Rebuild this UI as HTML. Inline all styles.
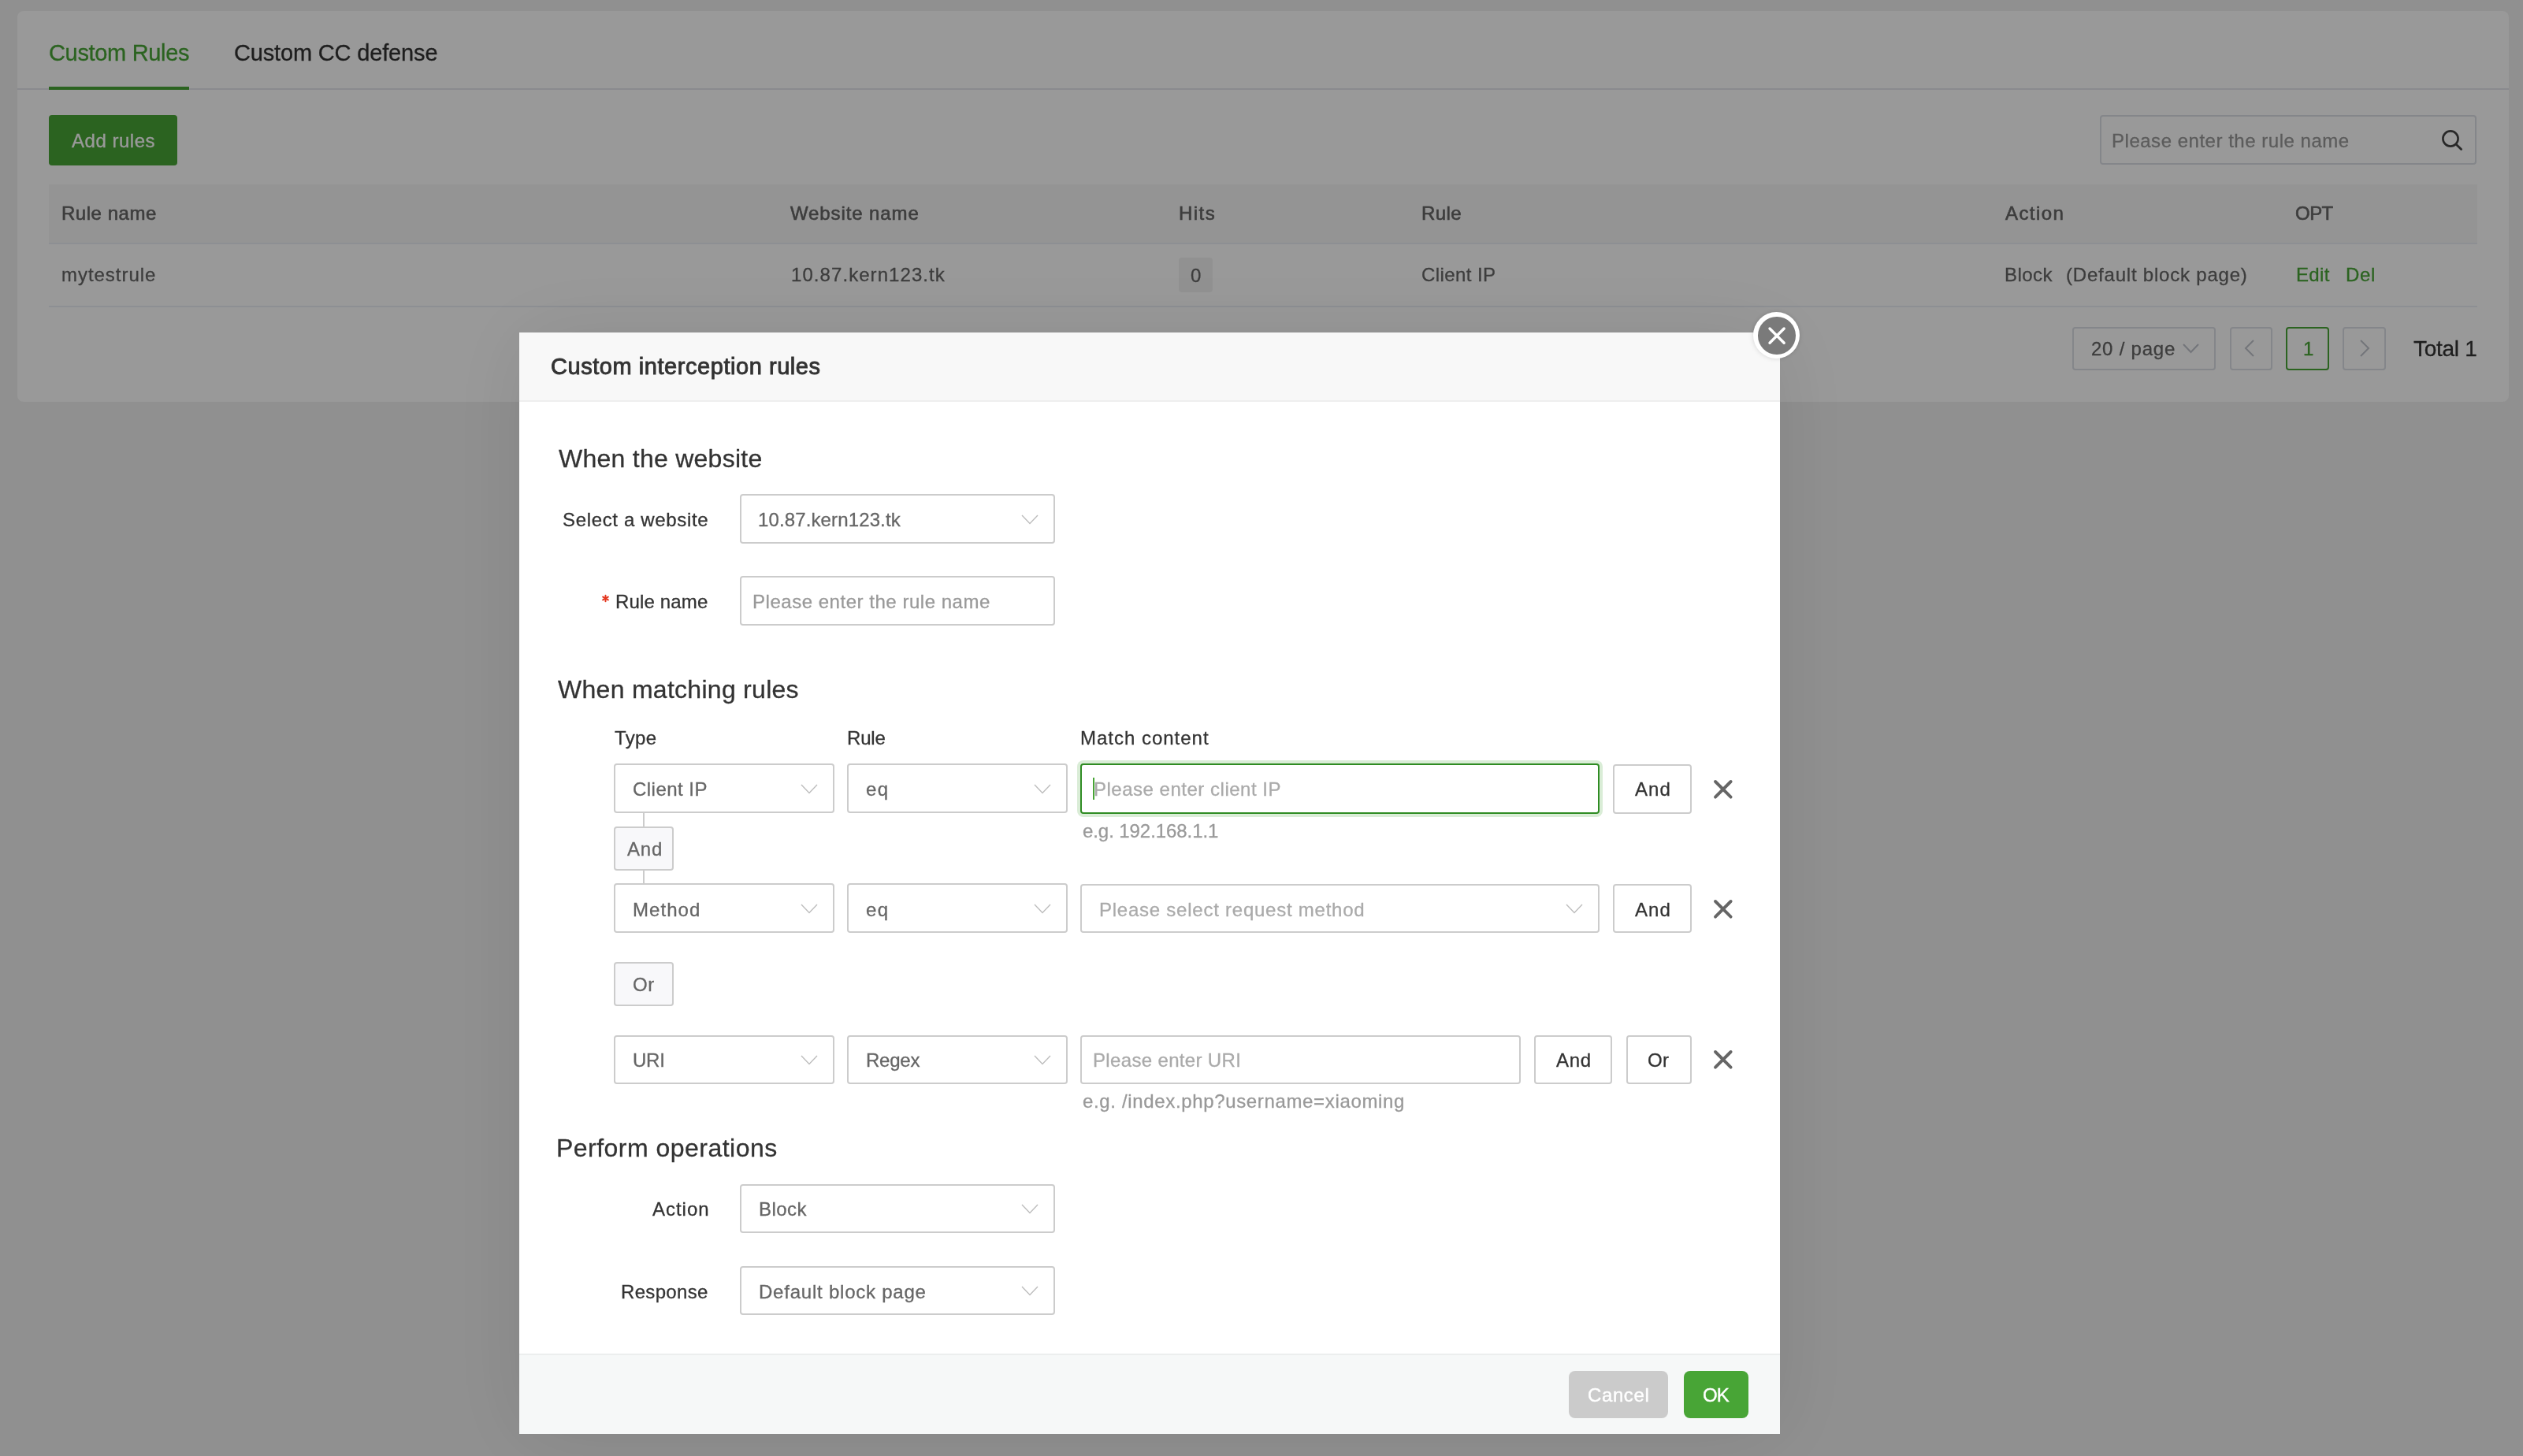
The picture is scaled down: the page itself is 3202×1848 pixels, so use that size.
<!DOCTYPE html>
<html><head><meta charset="utf-8"><title>Custom interception rules</title>
<style>
html,body{margin:0;padding:0;width:3202px;height:1848px;overflow:hidden;}
body{font-family:"Liberation Sans",sans-serif;position:relative;}
@media (max-width:2400px){html{zoom:0.5;}}
</style></head><body>
<div style="position:absolute;left:0;top:0;width:3202px;height:1848px;background:#f0f0f0"></div>
<div style="position:absolute;left:22px;top:14px;width:3162px;height:496px;box-sizing:border-box;background:#fff;border-radius:8px"></div>
<div style="position:absolute;left:22px;top:112px;width:3162px;height:2px;box-sizing:border-box;background:#e4e7ed"></div>
<div style="position:absolute;left:62.00px;top:53.35px;font-size:29px;line-height:29px;font-weight:400;color:#48a536;letter-spacing:-0.329px;white-space:pre;will-change:transform;-webkit-text-stroke:0.3px #48a536;">Custom Rules</div>
<div style="position:absolute;left:62px;top:110px;width:178px;height:4px;box-sizing:border-box;background:#48a536"></div>
<div style="position:absolute;left:296.50px;top:53.35px;font-size:29px;line-height:29px;font-weight:400;color:#333;letter-spacing:-0.162px;white-space:pre;will-change:transform;-webkit-text-stroke:0.3px #333;">Custom CC defense</div>
<div style="position:absolute;left:62px;top:146px;width:163px;height:64px;box-sizing:border-box;background:#48a536;border-radius:4px"></div>
<div style="position:absolute;left:91.00px;top:167.48px;font-size:24px;line-height:24px;font-weight:400;color:#fff;letter-spacing:0.514px;white-space:pre;will-change:transform;-webkit-text-stroke:0.3px #fff;">Add rules</div>
<div style="position:absolute;left:2665px;top:146px;width:478px;height:63px;box-sizing:border-box;border:2px solid #dcdfe6;border-radius:4px;background:#fff"></div>
<div style="position:absolute;left:2680.20px;top:166.98px;font-size:24px;line-height:24px;font-weight:400;color:#999;letter-spacing:0.519px;white-space:pre;will-change:transform;-webkit-text-stroke:0.3px #999;">Please enter the rule name</div>
<svg style="position:absolute;left:3094px;top:160px" width="36" height="36"><circle cx="16" cy="16" r="9.6" stroke="#444" stroke-width="2.6" fill="none"/><path d="M23.2 23.2 L29.6 29.6" stroke="#444" stroke-width="2.8" stroke-linecap="round"/></svg>
<div style="position:absolute;left:62px;top:234px;width:3082px;height:74px;box-sizing:border-box;background:#f7f7f7"></div>
<div style="position:absolute;left:62px;top:308px;width:3082px;height:2px;box-sizing:border-box;background:#ebeef5"></div>
<div style="position:absolute;left:62px;top:388px;width:3082px;height:2px;box-sizing:border-box;background:#ebeef5"></div>
<div style="position:absolute;left:78.10px;top:259.28px;font-size:24px;line-height:24px;font-weight:400;color:#666;letter-spacing:0.536px;white-space:pre;will-change:transform;-webkit-text-stroke:0.6px #666">Rule name</div>
<div style="position:absolute;left:1003.00px;top:259.28px;font-size:24px;line-height:24px;font-weight:400;color:#666;letter-spacing:0.898px;white-space:pre;will-change:transform;-webkit-text-stroke:0.6px #666">Website name</div>
<div style="position:absolute;left:1495.80px;top:259.28px;font-size:24px;line-height:24px;font-weight:400;color:#666;letter-spacing:1.456px;white-space:pre;will-change:transform;-webkit-text-stroke:0.6px #666">Hits</div>
<div style="position:absolute;left:1804.00px;top:259.28px;font-size:24px;line-height:24px;font-weight:400;color:#666;letter-spacing:0.396px;white-space:pre;will-change:transform;-webkit-text-stroke:0.6px #666">Rule</div>
<div style="position:absolute;left:2544.60px;top:259.28px;font-size:24px;line-height:24px;font-weight:400;color:#666;letter-spacing:1.409px;white-space:pre;will-change:transform;-webkit-text-stroke:0.6px #666">Action</div>
<div style="position:absolute;left:2913.20px;top:259.28px;font-size:24px;line-height:24px;font-weight:400;color:#666;letter-spacing:-0.538px;white-space:pre;will-change:transform;-webkit-text-stroke:0.6px #666">OPT</div>
<div style="position:absolute;left:78.10px;top:337.38px;font-size:24px;line-height:24px;font-weight:400;color:#666;letter-spacing:0.961px;white-space:pre;will-change:transform;-webkit-text-stroke:0.3px #666;">mytestrule</div>
<div style="position:absolute;left:1004.00px;top:337.38px;font-size:24px;line-height:24px;font-weight:400;color:#666;letter-spacing:1.067px;white-space:pre;will-change:transform;-webkit-text-stroke:0.3px #666;">10.87.kern123.tk</div>
<div style="position:absolute;left:1496px;top:327px;width:43px;height:44px;box-sizing:border-box;background:#f2f2f2;border-radius:4px"></div>
<div style="position:absolute;left:1511.00px;top:338.28px;font-size:24px;line-height:24px;font-weight:400;color:#666;letter-spacing:0.000px;white-space:pre;will-change:transform;-webkit-text-stroke:0.3px #666;">0</div>
<div style="position:absolute;left:1804.00px;top:337.38px;font-size:24px;line-height:24px;font-weight:400;color:#666;letter-spacing:0.413px;white-space:pre;will-change:transform;-webkit-text-stroke:0.3px #666;">Client IP</div>
<div style="position:absolute;left:2543.60px;top:337.38px;font-size:24px;line-height:24px;font-weight:400;color:#666;letter-spacing:0.428px;white-space:pre;will-change:transform;-webkit-text-stroke:0.3px #666;">Block</div>
<div style="position:absolute;left:2622.00px;top:337.38px;font-size:24px;line-height:24px;font-weight:400;color:#666;letter-spacing:0.790px;white-space:pre;will-change:transform;-webkit-text-stroke:0.3px #666;">(Default block page)</div>
<div style="position:absolute;left:2913.50px;top:337.38px;font-size:24px;line-height:24px;font-weight:400;color:#48a536;letter-spacing:0.338px;white-space:pre;will-change:transform;-webkit-text-stroke:0.3px #48a536;">Edit</div>
<div style="position:absolute;left:2977.00px;top:337.38px;font-size:24px;line-height:24px;font-weight:400;color:#48a536;letter-spacing:0.660px;white-space:pre;will-change:transform;-webkit-text-stroke:0.3px #48a536;">Del</div>
<div style="position:absolute;left:2630px;top:415px;width:182px;height:55px;box-sizing:border-box;border:2px solid #dcdfe6;border-radius:4px;background:#fff"></div>
<div style="position:absolute;left:2654.40px;top:431.28px;font-size:24px;line-height:24px;font-weight:400;color:#666;letter-spacing:0.770px;white-space:pre;will-change:transform;-webkit-text-stroke:0.3px #666;">20 / page</div>
<svg style="position:absolute;left:2769.0px;top:435.0px" width="23" height="14"><polyline points="2,2 11.5,12 21,2" fill="none" stroke="#c0c4cc" stroke-width="2"/></svg>
<div style="position:absolute;left:2830px;top:415px;width:54px;height:55px;box-sizing:border-box;border:2px solid #dcdfe6;border-radius:4px;background:#fff"></div>
<svg style="position:absolute;left:2845px;top:428px" width="22" height="28"><polyline points="15,4 5,14 15,24" fill="none" stroke="#c0c4cc" stroke-width="2"/></svg>
<div style="position:absolute;left:2901px;top:415px;width:55px;height:55px;box-sizing:border-box;border:2px solid #48a536;border-radius:4px;background:#fff"></div>
<div style="position:absolute;left:2923.40px;top:431.28px;font-size:24px;line-height:24px;font-weight:400;color:#48a536;letter-spacing:0.000px;white-space:pre;will-change:transform;-webkit-text-stroke:0.3px #48a536;">1</div>
<div style="position:absolute;left:2973px;top:415px;width:55px;height:55px;box-sizing:border-box;border:2px solid #dcdfe6;border-radius:4px;background:#fff"></div>
<svg style="position:absolute;left:2991px;top:428px" width="22" height="28"><polyline points="5,4 15,14 5,24" fill="none" stroke="#c0c4cc" stroke-width="2"/></svg>
<div style="position:absolute;left:3062.50px;top:428.70px;font-size:28px;line-height:28px;font-weight:400;color:#333;letter-spacing:-0.287px;white-space:pre;will-change:transform;-webkit-text-stroke:0.3px #333;">Total 1</div>
<div style="position:absolute;left:0;top:0;width:3202px;height:1848px;background:rgba(0,0,0,0.4)"></div>
<div style="position:absolute;left:659px;top:422px;width:1600px;height:1398px;box-sizing:border-box;background:#fff;box-shadow:2px 2px 100px rgba(0,0,0,0.09)"></div>
<div style="position:absolute;left:659px;top:422px;width:1600px;height:88px;box-sizing:border-box;background:#f8f8f8;border-bottom:2px solid #eee"></div>
<div style="position:absolute;left:698.50px;top:451.05px;font-size:29px;line-height:29px;font-weight:400;color:#333;letter-spacing:0.549px;white-space:pre;will-change:transform;-webkit-text-stroke:0.9px #333">Custom interception rules</div>
<div style="position:absolute;left:2225px;top:396px;width:59px;height:59px;border-radius:50%;background:#fff;box-shadow:0 0 6px rgba(0,0,0,0.15)"></div>
<div style="position:absolute;left:2231px;top:402px;width:47.5px;height:47.5px;border-radius:50%;background:#7a7a7a"></div>
<svg style="position:absolute;left:2241.6px;top:412.9px" width="26.2" height="26.2"><path d="M4 4 L22.2 22.2 M22.2 4 L4 22.2" stroke="#fff" stroke-width="3.4" stroke-linecap="round" fill="none"/></svg>
<div style="position:absolute;left:708.60px;top:565.71px;font-size:32px;line-height:32px;font-weight:400;color:#333;letter-spacing:0.256px;white-space:pre;will-change:transform;-webkit-text-stroke:0.3px #333;">When the website</div>
<div style="position:absolute;left:713.70px;top:648.48px;font-size:24px;line-height:24px;font-weight:400;color:#333;letter-spacing:0.659px;white-space:pre;will-change:transform;-webkit-text-stroke:0.3px #333;">Select a website</div>
<div style="position:absolute;left:939px;top:627px;width:400px;height:63px;box-sizing:border-box;border:2px solid #ccc;border-radius:4px;background:#fff"></div>
<svg style="position:absolute;left:1294.8px;top:651.75px" width="24" height="14.5"><polyline points="2,2 12.0,12.5 22,2" fill="none" stroke="#bdbdbd" stroke-width="1.4"/></svg>
<div style="position:absolute;left:962.30px;top:648.48px;font-size:24px;line-height:24px;font-weight:400;color:#666;letter-spacing:0.127px;white-space:pre;will-change:transform;-webkit-text-stroke:0.3px #666;">10.87.kern123.tk</div>
<svg style="position:absolute;left:758px;top:749px" width="21" height="21"><g stroke="#e4371f" stroke-width="2" stroke-linecap="round"><path d="M10.5 6.7 V14.3"/><path d="M7.2 8.6 L13.8 12.4"/><path d="M13.8 8.6 L7.2 12.4"/></g></svg>
<div style="position:absolute;left:781.00px;top:751.98px;font-size:24px;line-height:24px;font-weight:400;color:#333;letter-spacing:0.161px;white-space:pre;will-change:transform;-webkit-text-stroke:0.3px #333;">Rule name</div>
<div style="position:absolute;left:939px;top:731px;width:400px;height:63px;box-sizing:border-box;border:2px solid #ccc;border-radius:4px;background:#fff"></div>
<div style="position:absolute;left:955.00px;top:751.98px;font-size:24px;line-height:24px;font-weight:400;color:#999;letter-spacing:0.527px;white-space:pre;will-change:transform;-webkit-text-stroke:0.3px #999;">Please enter the rule name</div>
<div style="position:absolute;left:708.40px;top:859.01px;font-size:32px;line-height:32px;font-weight:400;color:#333;letter-spacing:0.279px;white-space:pre;will-change:transform;-webkit-text-stroke:0.3px #333;">When matching rules</div>
<div style="position:absolute;left:780.30px;top:925.28px;font-size:24px;line-height:24px;font-weight:400;color:#333;letter-spacing:0.339px;white-space:pre;will-change:transform;-webkit-text-stroke:0.3px #333;">Type</div>
<div style="position:absolute;left:1075.00px;top:925.28px;font-size:24px;line-height:24px;font-weight:400;color:#333;letter-spacing:-0.171px;white-space:pre;will-change:transform;-webkit-text-stroke:0.3px #333;">Rule</div>
<div style="position:absolute;left:1370.80px;top:925.28px;font-size:24px;line-height:24px;font-weight:400;color:#333;letter-spacing:0.985px;white-space:pre;will-change:transform;-webkit-text-stroke:0.3px #333;">Match content</div>
<div style="position:absolute;left:779px;top:969px;width:280px;height:63px;box-sizing:border-box;border:2px solid #ccc;border-radius:4px;background:#fff"></div>
<svg style="position:absolute;left:1015.0px;top:994.1500000000001px" width="24" height="14.5"><polyline points="2,2 12.0,12.5 22,2" fill="none" stroke="#bdbdbd" stroke-width="1.4"/></svg>
<div style="position:absolute;left:802.70px;top:990.28px;font-size:24px;line-height:24px;font-weight:400;color:#666;letter-spacing:0.476px;white-space:pre;will-change:transform;-webkit-text-stroke:0.3px #666;">Client IP</div>
<div style="position:absolute;left:1075px;top:969px;width:280px;height:63px;box-sizing:border-box;border:2px solid #ccc;border-radius:4px;background:#fff"></div>
<svg style="position:absolute;left:1310.6px;top:994.1500000000001px" width="24" height="14.5"><polyline points="2,2 12.0,12.5 22,2" fill="none" stroke="#bdbdbd" stroke-width="1.4"/></svg>
<div style="position:absolute;left:1099.00px;top:990.28px;font-size:24px;line-height:24px;font-weight:400;color:#666;letter-spacing:1.352px;white-space:pre;will-change:transform;-webkit-text-stroke:0.3px #666;">eq</div>
<div style="position:absolute;left:1371px;top:969px;width:659px;height:64px;box-sizing:border-box;border:2px solid #2f8c23;border-radius:4px;background:#fff;box-shadow:0 0 0 4px rgba(72,165,54,0.2)"></div>
<div style="position:absolute;left:1387px;top:987px;width:2px;height:28px;box-sizing:border-box;background:#48a536"></div>
<div style="position:absolute;left:1387.50px;top:990.28px;font-size:24px;line-height:24px;font-weight:400;color:#aaa;letter-spacing:0.510px;white-space:pre;will-change:transform;-webkit-text-stroke:0.3px #aaa;">Please enter client IP</div>
<div style="position:absolute;left:2047px;top:970px;width:100px;height:63px;box-sizing:border-box;border:2px solid #ccc;border-radius:4px;background:#fff"></div>
<div style="position:absolute;left:2074.60px;top:990.28px;font-size:24px;line-height:24px;font-weight:400;color:#333;letter-spacing:1.022px;white-space:pre;will-change:transform;-webkit-text-stroke:0.3px #333;">And</div>
<svg style="position:absolute;left:2173.2px;top:987.9000000000001px" width="27.6" height="27.6"><path d="M4 4 L23.6 23.6 M23.6 4 L4 23.6" stroke="#666" stroke-width="3.9" stroke-linecap="round" fill="none"/></svg>
<div style="position:absolute;left:1374.00px;top:1042.58px;font-size:24px;line-height:24px;font-weight:400;color:#999;letter-spacing:-0.076px;white-space:pre;will-change:transform;-webkit-text-stroke:0.3px #999;">e.g. 192.168.1.1</div>
<div style="position:absolute;left:816px;top:1032px;width:2px;height:18px;box-sizing:border-box;background:#ccc"></div>
<div style="position:absolute;left:779px;top:1049px;width:76px;height:56px;box-sizing:border-box;border:2px solid #ccc;border-radius:4px;background:#f8f8fa"></div>
<div style="position:absolute;left:795.50px;top:1066.48px;font-size:24px;line-height:24px;font-weight:400;color:#666;letter-spacing:0.822px;white-space:pre;will-change:transform;-webkit-text-stroke:0.3px #666;">And</div>
<div style="position:absolute;left:816px;top:1104px;width:2px;height:18px;box-sizing:border-box;background:#ccc"></div>
<div style="position:absolute;left:779px;top:1121px;width:280px;height:63px;box-sizing:border-box;border:2px solid #ccc;border-radius:4px;background:#fff"></div>
<svg style="position:absolute;left:1015.0px;top:1145.75px" width="24" height="14.5"><polyline points="2,2 12.0,12.5 22,2" fill="none" stroke="#bdbdbd" stroke-width="1.4"/></svg>
<div style="position:absolute;left:802.70px;top:1142.68px;font-size:24px;line-height:24px;font-weight:400;color:#666;letter-spacing:1.059px;white-space:pre;will-change:transform;-webkit-text-stroke:0.3px #666;">Method</div>
<div style="position:absolute;left:1075px;top:1121px;width:280px;height:63px;box-sizing:border-box;border:2px solid #ccc;border-radius:4px;background:#fff"></div>
<svg style="position:absolute;left:1310.6px;top:1145.75px" width="24" height="14.5"><polyline points="2,2 12.0,12.5 22,2" fill="none" stroke="#bdbdbd" stroke-width="1.4"/></svg>
<div style="position:absolute;left:1099.00px;top:1142.68px;font-size:24px;line-height:24px;font-weight:400;color:#666;letter-spacing:1.352px;white-space:pre;will-change:transform;-webkit-text-stroke:0.3px #666;">eq</div>
<div style="position:absolute;left:1371px;top:1122px;width:659px;height:62px;box-sizing:border-box;border:2px solid #ccc;border-radius:4px;background:#fff"></div>
<svg style="position:absolute;left:1986.0px;top:1146.4px" width="24" height="14.5"><polyline points="2,2 12.0,12.5 22,2" fill="none" stroke="#bdbdbd" stroke-width="1.4"/></svg>
<div style="position:absolute;left:1394.70px;top:1142.68px;font-size:24px;line-height:24px;font-weight:400;color:#aaa;letter-spacing:0.758px;white-space:pre;will-change:transform;-webkit-text-stroke:0.3px #aaa;">Please select request method</div>
<div style="position:absolute;left:2047px;top:1122px;width:100px;height:62px;box-sizing:border-box;border:2px solid #ccc;border-radius:4px;background:#fff"></div>
<div style="position:absolute;left:2074.60px;top:1142.68px;font-size:24px;line-height:24px;font-weight:400;color:#333;letter-spacing:1.022px;white-space:pre;will-change:transform;-webkit-text-stroke:0.3px #333;">And</div>
<svg style="position:absolute;left:2173.2px;top:1139.7px" width="27.6" height="27.6"><path d="M4 4 L23.6 23.6 M23.6 4 L4 23.6" stroke="#666" stroke-width="3.9" stroke-linecap="round" fill="none"/></svg>
<div style="position:absolute;left:779px;top:1221px;width:76px;height:56px;box-sizing:border-box;border:2px solid #ccc;border-radius:4px;background:#f8f8fa"></div>
<div style="position:absolute;left:802.70px;top:1238.28px;font-size:24px;line-height:24px;font-weight:400;color:#666;letter-spacing:0.632px;white-space:pre;will-change:transform;-webkit-text-stroke:0.3px #666;">Or</div>
<div style="position:absolute;left:779px;top:1314px;width:280px;height:62px;box-sizing:border-box;border:2px solid #ccc;border-radius:4px;background:#fff"></div>
<svg style="position:absolute;left:1015.0px;top:1338.25px" width="24" height="14.5"><polyline points="2,2 12.0,12.5 22,2" fill="none" stroke="#bdbdbd" stroke-width="1.4"/></svg>
<div style="position:absolute;left:802.70px;top:1334.28px;font-size:24px;line-height:24px;font-weight:400;color:#666;letter-spacing:-0.232px;white-space:pre;will-change:transform;-webkit-text-stroke:0.3px #666;">URI</div>
<div style="position:absolute;left:1075px;top:1314px;width:280px;height:62px;box-sizing:border-box;border:2px solid #ccc;border-radius:4px;background:#fff"></div>
<svg style="position:absolute;left:1310.6px;top:1338.25px" width="24" height="14.5"><polyline points="2,2 12.0,12.5 22,2" fill="none" stroke="#bdbdbd" stroke-width="1.4"/></svg>
<div style="position:absolute;left:1099.00px;top:1334.28px;font-size:24px;line-height:24px;font-weight:400;color:#666;letter-spacing:-0.219px;white-space:pre;will-change:transform;-webkit-text-stroke:0.3px #666;">Regex</div>
<div style="position:absolute;left:1371px;top:1314px;width:559px;height:62px;box-sizing:border-box;border:2px solid #ccc;border-radius:4px;background:#fff"></div>
<div style="position:absolute;left:1386.80px;top:1334.28px;font-size:24px;line-height:24px;font-weight:400;color:#aaa;letter-spacing:0.341px;white-space:pre;will-change:transform;-webkit-text-stroke:0.3px #aaa;">Please enter URI</div>
<div style="position:absolute;left:1947px;top:1314px;width:99px;height:62px;box-sizing:border-box;border:2px solid #ccc;border-radius:4px;background:#fff"></div>
<div style="position:absolute;left:1975.40px;top:1334.28px;font-size:24px;line-height:24px;font-weight:400;color:#333;letter-spacing:0.722px;white-space:pre;will-change:transform;-webkit-text-stroke:0.3px #333;">And</div>
<div style="position:absolute;left:2064px;top:1314px;width:83px;height:62px;box-sizing:border-box;border:2px solid #ccc;border-radius:4px;background:#fff"></div>
<div style="position:absolute;left:2091.00px;top:1334.28px;font-size:24px;line-height:24px;font-weight:400;color:#333;letter-spacing:0.432px;white-space:pre;will-change:transform;-webkit-text-stroke:0.3px #333;">Or</div>
<svg style="position:absolute;left:2173.2px;top:1331.2px" width="27.6" height="27.6"><path d="M4 4 L23.6 23.6 M23.6 4 L4 23.6" stroke="#666" stroke-width="3.9" stroke-linecap="round" fill="none"/></svg>
<div style="position:absolute;left:1374.00px;top:1386.28px;font-size:24px;line-height:24px;font-weight:400;color:#999;letter-spacing:0.649px;white-space:pre;will-change:transform;-webkit-text-stroke:0.3px #999;">e.g. /index.php?username=xiaoming</div>
<div style="position:absolute;left:706.40px;top:1441.01px;font-size:32px;line-height:32px;font-weight:400;color:#333;letter-spacing:0.475px;white-space:pre;will-change:transform;-webkit-text-stroke:0.3px #333;">Perform operations</div>
<div style="position:absolute;left:828.00px;top:1523.28px;font-size:24px;line-height:24px;font-weight:400;color:#333;letter-spacing:0.969px;white-space:pre;will-change:transform;-webkit-text-stroke:0.3px #333;">Action</div>
<div style="position:absolute;left:939px;top:1503px;width:400px;height:62px;box-sizing:border-box;border:2px solid #ccc;border-radius:4px;background:#fff"></div>
<svg style="position:absolute;left:1295.0px;top:1527.25px" width="24" height="14.5"><polyline points="2,2 12.0,12.5 22,2" fill="none" stroke="#bdbdbd" stroke-width="1.4"/></svg>
<div style="position:absolute;left:963.20px;top:1523.28px;font-size:24px;line-height:24px;font-weight:400;color:#666;letter-spacing:0.428px;white-space:pre;will-change:transform;-webkit-text-stroke:0.3px #666;">Block</div>
<div style="position:absolute;left:788.00px;top:1627.78px;font-size:24px;line-height:24px;font-weight:400;color:#333;letter-spacing:0.325px;white-space:pre;will-change:transform;-webkit-text-stroke:0.3px #333;">Response</div>
<div style="position:absolute;left:939px;top:1607px;width:400px;height:62px;box-sizing:border-box;border:2px solid #ccc;border-radius:4px;background:#fff"></div>
<svg style="position:absolute;left:1295.0px;top:1631.25px" width="24" height="14.5"><polyline points="2,2 12.0,12.5 22,2" fill="none" stroke="#bdbdbd" stroke-width="1.4"/></svg>
<div style="position:absolute;left:963.20px;top:1627.78px;font-size:24px;line-height:24px;font-weight:400;color:#666;letter-spacing:0.774px;white-space:pre;will-change:transform;-webkit-text-stroke:0.3px #666;">Default block page</div>
<div style="position:absolute;left:659px;top:1718px;width:1600px;height:102px;box-sizing:border-box;background:#f6f8f8;border-top:2px solid #eceeee"></div>
<div style="position:absolute;left:1991px;top:1740px;width:126px;height:60px;box-sizing:border-box;background:#cbcbcb;border-radius:8px"></div>
<div style="position:absolute;left:2015.00px;top:1759.48px;font-size:24px;line-height:24px;font-weight:400;color:#fff;letter-spacing:0.605px;white-space:pre;will-change:transform;-webkit-text-stroke:0.4px #fff">Cancel</div>
<div style="position:absolute;left:2137px;top:1740px;width:82px;height:60px;box-sizing:border-box;background:#48a536;border-radius:8px"></div>
<div style="position:absolute;left:2160.80px;top:1759.48px;font-size:24px;line-height:24px;font-weight:400;color:#fff;letter-spacing:-0.968px;white-space:pre;will-change:transform;-webkit-text-stroke:0.4px #fff">OK</div>
</body></html>
